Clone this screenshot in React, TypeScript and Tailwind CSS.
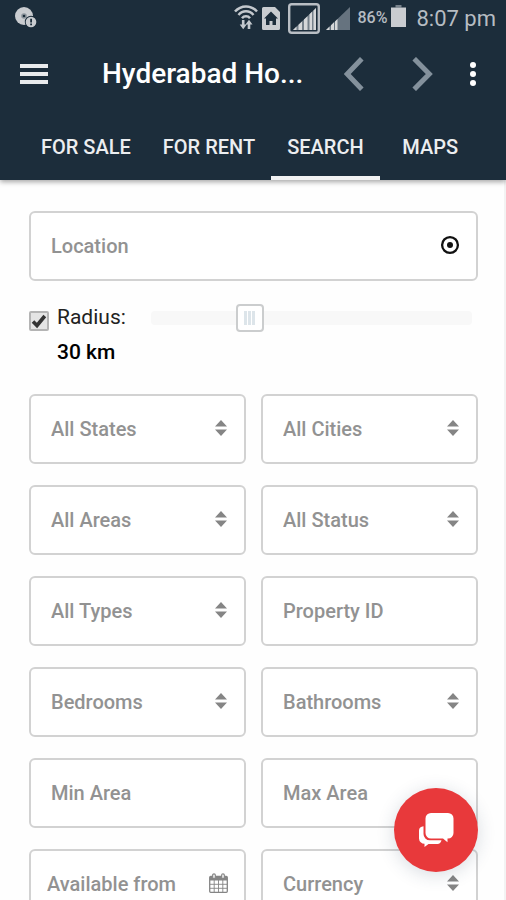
import React from "react";

const fieldClass =
  "h-[70px] w-full rounded-md border-2 border-[#d2d2d2] bg-white px-5 text-xl font-medium text-[#929292] outline-none placeholder:text-[#929292] placeholder:opacity-100 focus:border-[#9a9a9a]";

function NotificationIcon() {
  return (
    <svg className="ml-3.5 size-6" viewBox="0 0 24 24" aria-hidden="true">
      <circle cx="10" cy="10" r="9" fill="#c9ccd0" />
      <circle cx="10" cy="10" r="2.8" fill="#8b939b" />
      <circle cx="10" cy="10" r="1.3" fill="#1c2d3b" />
      <circle cx="17" cy="16" r="6.2" fill="#1c2d3b" />
      <circle cx="17" cy="16" r="5.3" fill="#c9ccd0" />
      <path d="M16.2 12.8h1.8v3.8h-1.8zM16.2 17.6h1.8v1.7h-1.8z" fill="#1c2d3b" />
    </svg>
  );
}

function WifiIcon() {
  return (
    <svg className="h-[26px] w-6" viewBox="0 0 24 26" fill="none" stroke="#c3c8cd" strokeWidth="2.5" aria-hidden="true">
      <path d="M1 6.500C7 -.3 17 -.3 23 6.500" />
      <path d="M4.500 10C8.600 5 15.400 5 19.500 10" />
      <path d="M8 13.200C10 10.600 14 10.600 16 13.200" />
      <path d="M9.200 15v7M15 24v-7" strokeWidth="2.600" />
      <path d="M5.700 19.500h7l-3.500 4.800zM11.500 19.500h7l-3.500-4.800z" fill="#c3c8cd" stroke="none" />
    </svg>
  );
}

function SimIcon() {
  return (
    <svg className="h-[23px] w-[18px]" viewBox="0 0 18 23" aria-hidden="true">
      <path d="M1.500 0H13l5 5v16.500a1.500 1.500 0 0 1-1.500 1.500h-15A1.500 1.500 0 0 1 0 21.500v-20A1.500 1.500 0 0 1 1.500 0z" fill="#c9ccd0" />
      <path d="M9 4.500l7 7h-2v6.500h-3.500v-4h-3v4H4v-6.500H2z" fill="#1c2d3b" />
    </svg>
  );
}

function BoxedSignalIcon() {
  return (
    <svg className="h-[31px] w-8" viewBox="0 0 32 31" aria-hidden="true">
      <rect x="1.200" y="1.200" width="29.600" height="28.600" rx="2.500" fill="none" stroke="#b9bec4" strokeWidth="2.400" />
      <path d="M5 27L28 5v22z" fill="#75808a" />
      <path d="M5 27l3.500-3.400V27zM10.500 27v-5.300l3.500-3.300V27zM16 27V16.500l3.500-3.300V27zM21.500 27V11.200L24 8.800V27zM25.500 27V7.400L28 5v22z" fill="#d5d7d9" />
    </svg>
  );
}

function SignalIcon() {
  return (
    <svg className="h-[23px] w-6" viewBox="0 0 24 23" aria-hidden="true">
      <path d="M0 23L24 0v23z" fill="#66737f" />
      <path d="M0 23l3.500-3.400V23zM5 23v-4.800l3-2.900V23zM9 23v-8.600l2.500-2.400v11z" fill="#d5d7d9" />
    </svg>
  );
}

function BatteryIcon() {
  return (
    <svg className="h-[22px] w-[15px]" viewBox="0 0 15 22" aria-hidden="true">
      <path d="M4.500 0h6v2.500h-6z" fill="#77828c" />
      <path d="M0 2.500h15V22H0z" fill="#c9ccd0" />
    </svg>
  );
}

function StatusBar() {
  return (
    <div className="flex h-9 items-center justify-between pr-2.5 text-[#b6bcc2]">
      <NotificationIcon />
      <div className="flex items-center">
        <WifiIcon />
        <span className="ml-1 flex"><SimIcon /></span>
        <span className="ml-2 flex"><BoxedSignalIcon /></span>
        <span className="ml-1.5 flex"><SignalIcon /></span>
        <span className="ml-2 text-base font-medium">86%</span>
        <span className="ml-1 flex pb-1"><BatteryIcon /></span>
        <span className="ml-2.5 text-[22px]">8:07 pm</span>
      </div>
    </div>
  );
}

function AppBar() {
  return (
    <div className="flex h-[76px] items-center">
      <button type="button" aria-label="Menu" className="ml-5 flex w-7 flex-col gap-1">
        <span className="h-1 bg-[#e9ebed]" />
        <span className="h-1 bg-[#e9ebed]" />
        <span className="h-1 bg-[#e9ebed]" />
      </button>
      <h1 className="ml-[54px] flex-1 truncate text-[28px] leading-9 font-medium text-white">Hyderabad Ho...</h1>
      <button type="button" aria-label="Previous" className="ml-10">
        <svg className="h-[34px] w-5" viewBox="0 0 20 34" fill="none" stroke="#84919c" strokeWidth="5" aria-hidden="true">
          <path d="M17.800 1.700L3.200 17l14.600 15.300" />
        </svg>
      </button>
      <button type="button" aria-label="Next" className="ml-12">
        <svg className="h-[34px] w-[22px]" viewBox="0 0 22 34" fill="none" stroke="#84919c" strokeWidth="5" aria-hidden="true">
          <path d="M2.200 1.700L17.300 17 2.200 32.300" />
        </svg>
      </button>
      <button type="button" aria-label="More options" className="mr-[30px] ml-9 flex flex-col gap-[3px]">
        <span className="size-1.5 rounded-full bg-white" />
        <span className="size-1.5 rounded-full bg-white" />
        <span className="size-1.5 rounded-full bg-white" />
      </button>
    </div>
  );
}

const tabs = ["FOR SALE", "FOR RENT", "SEARCH", "MAPS"];

function Tabs() {
  return (
    <nav className="flex h-[68px] pl-[25px] text-xl font-medium text-[#eceef0]">
      {tabs.map((tab) => (
        <a
          key={tab}
          href="#"
          aria-current={tab === "SEARCH" ? "page" : undefined}
          className="flex min-w-[101px] items-center justify-center border-b-4 border-transparent px-4 pt-1.5 whitespace-nowrap aria-[current=page]:border-[#f1f2f3]"
        >
          {tab}
        </a>
      ))}
    </nav>
  );
}

function SelectField({ label }: { label: string }) {
  return (
    <div className="relative">
      <select aria-label={label} className={fieldClass + " appearance-none"}>
        <option>{label}</option>
      </select>
      <svg className="pointer-events-none absolute top-[26px] right-[19px] h-4 w-3" viewBox="0 0 12 16" fill="#858585" aria-hidden="true">
        <path d="M6 0l6 6.500H0zM6 16l6-6.500H0z" />
      </svg>
    </div>
  );
}

function TextField({ label }: { label: string }) {
  return <input type="text" aria-label={label} placeholder={label} className={fieldClass} />;
}

function DateField() {
  return (
    <div className="relative">
      <input
        type="text"
        aria-label="Available from"
        placeholder="Available from"
        className="h-[70px] w-full rounded-md border-2 border-[#d2d2d2] bg-white px-4 text-xl font-medium text-[#929292] outline-none placeholder:text-[#929292] placeholder:opacity-100"
      />
      <svg className="pointer-events-none absolute top-6 right-[18px] h-5 w-[19px]" viewBox="0 0 19 20" fill="none" stroke="#858585" aria-hidden="true">
        <rect x=".7" y="3.500" width="17.600" height="15.800" rx="1" strokeWidth="1.300" />
        <path d="M1 4h17v3.500H1z" fill="#858585" stroke="none" />
        <path d="M1 11.300h17M1 15.300h17M5.200 7v12M9.500 7v12M13.800 7v12" strokeWidth=".9" />
        <rect x="3.700" y=".8" width="2.600" height="4.700" rx="1.300" fill="#fff" strokeWidth="1.200" />
        <rect x="12.700" y=".8" width="2.600" height="4.700" rx="1.300" fill="#fff" strokeWidth="1.200" />
      </svg>
    </div>
  );
}

function RadiusRow() {
  return (
    <div className="mt-[23px] flex items-start">
      <div className="mt-[7px] grid size-5 shrink-0">
        <input
          id="radius-enabled"
          type="checkbox"
          defaultChecked
          className="peer col-start-1 row-start-1 size-5 appearance-none rounded-xs border-2 border-[#b4b4b4] bg-[#e4e4e4]"
        />
        <svg className="pointer-events-none invisible col-start-1 row-start-1 size-5 peer-checked:visible" viewBox="0 0 20 20" fill="none" stroke="#333" strokeWidth="3.600" aria-hidden="true">
          <path d="M4 10.500l4 4L15.800 5" />
        </svg>
      </div>
      <label htmlFor="radius-enabled" className="ml-2 w-[94px] shrink-0 text-[21px] leading-[26px] text-[#222]">
        Radius:
        <strong className="mt-[9px] block font-medium text-black">30 km</strong>
      </label>
      <input
        type="range"
        aria-label="Radius in km"
        min="0"
        max="104"
        defaultValue="30"
        className="mr-1.5 h-7 min-w-0 flex-1 appearance-none bg-transparent [&::-webkit-slider-runnable-track]:h-3.5 [&::-webkit-slider-runnable-track]:rounded-sm [&::-webkit-slider-runnable-track]:bg-[#f8f8f8] [&::-webkit-slider-thumb]:-mt-[7px] [&::-webkit-slider-thumb]:size-7 [&::-webkit-slider-thumb]:appearance-none [&::-webkit-slider-thumb]:rounded-sm [&::-webkit-slider-thumb]:border-2 [&::-webkit-slider-thumb]:border-[#cbcdce] [&::-webkit-slider-thumb]:bg-white [&::-webkit-slider-thumb]:bg-[repeating-linear-gradient(to_right,#dde5ea_0_3px,#fff_3px_4px)] [&::-webkit-slider-thumb]:bg-[length:11px_14px] [&::-webkit-slider-thumb]:bg-center [&::-webkit-slider-thumb]:bg-no-repeat"
      />
    </div>
  );
}

export default function App() {
  return (
    <div className="relative flex h-screen flex-col overflow-hidden bg-[#fefefe] font-[Roboto,sans-serif]">
      <header className="z-10 shrink-0 bg-[#1c2d3b] shadow-[0_2px_5px_rgba(0,0,0,0.35)]">
        <StatusBar />
        <AppBar />
        <Tabs />
      </header>

      <main className="min-h-0 flex-1 overflow-y-auto border-r-2 border-[#f3f3f3] pt-[31px] pr-[26px] pb-7 pl-[29px] [scrollbar-width:none]">
        <form>
          <div className="relative">
            <TextField label="Location" />
            <button type="button" aria-label="Use my location" className="absolute top-6 right-[18px]">
              <svg className="size-5" viewBox="0 0 20 20" aria-hidden="true">
                <circle cx="10" cy="10" r="7.900" fill="none" stroke="#111" strokeWidth="2.300" />
                <circle cx="10" cy="10" r="3" fill="#111" />
              </svg>
            </button>
          </div>

          <RadiusRow />

          <div className="mt-[29px] grid grid-cols-2 gap-x-[15px] gap-y-[21px]">
            <SelectField label="All States" />
            <SelectField label="All Cities" />
            <SelectField label="All Areas" />
            <SelectField label="All Status" />
            <SelectField label="All Types" />
            <TextField label="Property ID" />
            <SelectField label="Bedrooms" />
            <SelectField label="Bathrooms" />
            <TextField label="Min Area" />
            <TextField label="Max Area" />
            <DateField />
            <SelectField label="Currency" />
          </div>
        </form>
      </main>

      <button
        type="button"
        aria-label="Open chat"
        className="absolute right-7 bottom-7 z-20 flex size-[84px] items-center justify-center rounded-full bg-[#e8393b] shadow-[0_3px_18px_rgba(40,60,90,0.18)]"
      >
        <svg className="h-9 w-9" viewBox="0 0 36 36" fill="#fff" aria-hidden="true">
          <path d="M13 1h17a5.500 5.500 0 0 1 5.500 5.500v14.500a5.500 5.500 0 0 1-5.500 5.500h-.5v3.800L25 26.500H13A5.500 5.500 0 0 1 7.500 21V6.500A5.500 5.500 0 0 1 13 1z" />
          <path d="M5.500 14.300v7.700a6.300 6.300 0 0 0 6.300 6.300H23.500c-.5 2.300-2 3.700-4 3.700H10.500L6.500 35v-3.200A5.500 5.500 0 0 1 1 26.500V18.500c0-2.500 1.800-4 4.500-4.200z" />
        </svg>
      </button>
    </div>
  );
}
